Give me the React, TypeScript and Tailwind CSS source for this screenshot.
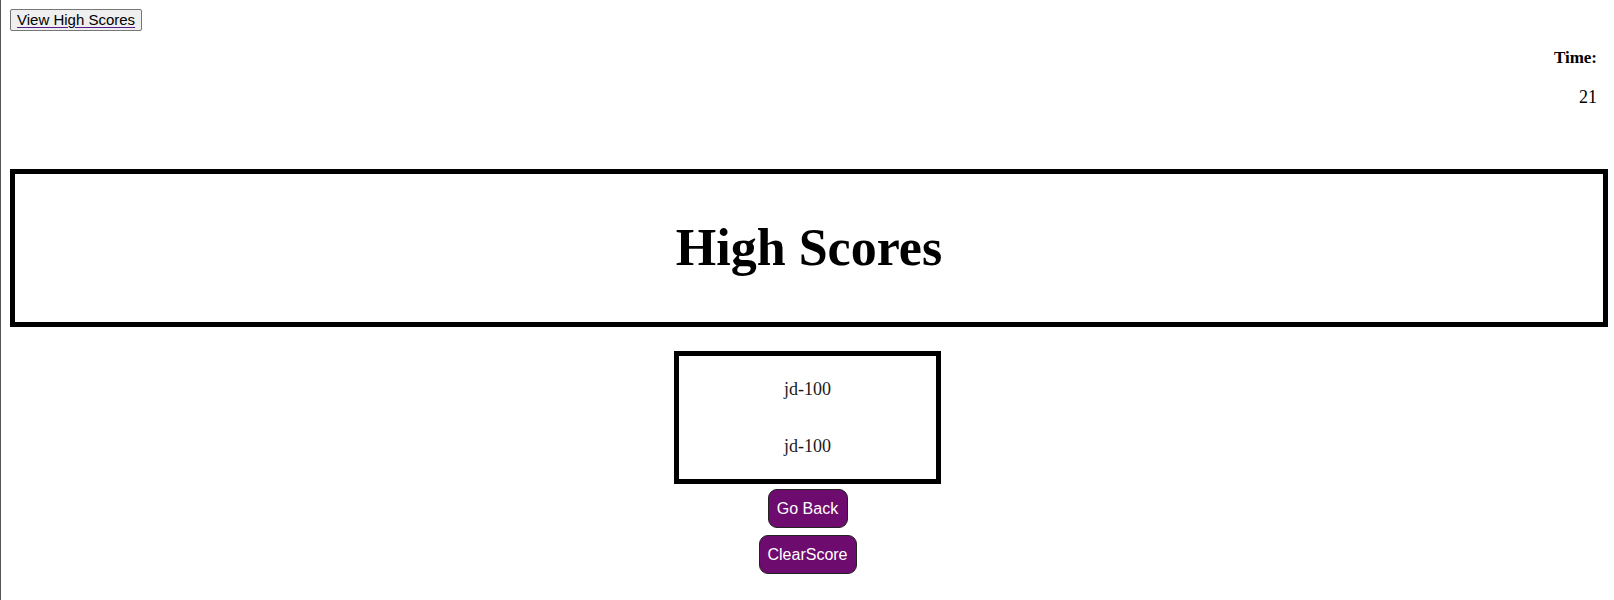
import React from "react";

const scores = ["jd-100", "jd-100"];

export default function App() {
  return (
    <div className="min-h-[600px] bg-white border-l border-[#555] font-['Liberation_Serif',serif] text-black">
      {/* top bar */}
      <div className="pl-[9px] pt-[8px]">
        <button className="h-[22px] px-[6px] bg-[#efefef] border border-[#767676] rounded-[2px] font-['Liberation_Sans',Arial,sans-serif] text-[15px] leading-[18px] text-black">
          <span className="underline decoration-[#551a8b] underline-offset-2">View High Scores</span>
        </button>
      </div>

      {/* timer */}
      <div className="flex flex-col items-end pr-[17px]">
        <div className="mt-[16px] text-[17px] font-bold leading-[20px]">Time:</div>
        <div className="mt-[19px] text-[18px] leading-[20px]">21</div>
      </div>

      {/* heading */}
      <div className="ml-[9px] mr-[6px] mt-[62px] h-[158px] border-[5px] border-black flex items-center justify-center">
        <h1 className="text-[52px] font-bold leading-none">High Scores</h1>
      </div>

      {/* score list */}
      <div className="flex flex-col items-center">
        <div className="mt-[24px] w-[267px] h-[133px] border-[5px] border-black flex flex-col items-center pt-[21px]">
          {scores.map((s, i) => (
            <p key={i} className={`text-[18px] leading-[24px] text-[#1a1a1a] ${i > 0 ? "mt-[33px]" : ""}`}>
              {s}
            </p>
          ))}
        </div>

        <button className="mt-[5px] w-[80px] h-[39px] bg-[#6e0b6e] border border-[#222] rounded-[9px] text-white font-['Liberation_Sans',Arial,sans-serif] text-[16px] flex items-center justify-center">
          Go Back
        </button>
        <button className="mt-[7px] w-[98px] h-[39px] bg-[#6e0b6e] border border-[#222] rounded-[9px] text-white font-['Liberation_Sans',Arial,sans-serif] text-[16px] flex items-center justify-center">
          ClearScore
        </button>
      </div>
    </div>
  );
}
